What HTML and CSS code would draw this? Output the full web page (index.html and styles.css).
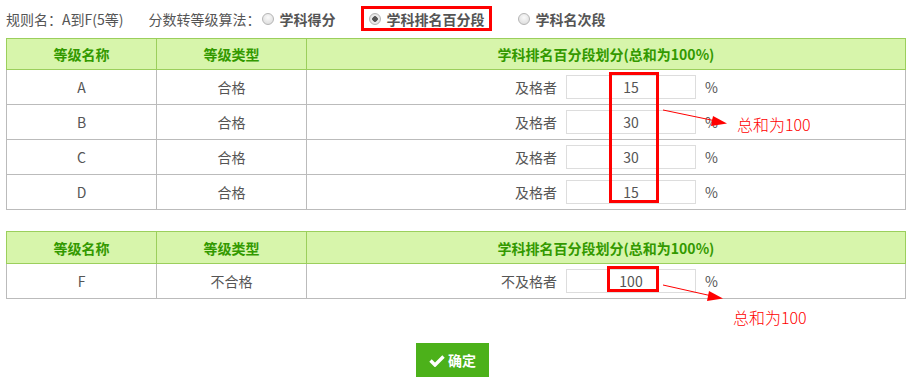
FILE: index.html
```html
<!DOCTYPE html>
<html lang="zh-CN">
<head>
    <meta charset="UTF-8">
    <meta name="viewport" content="width=device-width, initial-scale=1.0">
    <title>等级规则设置</title>

    <!-- CSS Styling -->
    <link rel="stylesheet" href="styles.css">
</head>
<body>

    <div class="page">

        <!-- Rule name and conversion method -->
        <div class="rule-bar">
            <span class="rule-name">规则名：A到F(5等)</span>
            <span class="algo-label">分数转等级算法：</span>
            <label class="opt"><span class="radio"></span>学科得分</label>
            <label class="opt opt-marked"><span class="radio checked"></span>学科排名百分段</label>
            <label class="opt"><span class="radio"></span>学科名次段</label>
        </div>

        <!-- Passing grades -->
        <table class="grade-table">
            <colgroup>
                <col class="col-name">
                <col class="col-type">
                <col>
            </colgroup>
            <thead>
                <tr>
                    <th>等级名称</th>
                    <th>等级类型</th>
                    <th>学科排名百分段划分(总和为100%)</th>
                </tr>
            </thead>
            <tbody>
                <tr>
                    <td>A</td>
                    <td>合格</td>
                    <td><div class="pct-field"><span class="pct-label">及格者</span><input type="text" value="15"><span class="pct-unit">%</span></div></td>
                </tr>
                <tr>
                    <td>B</td>
                    <td>合格</td>
                    <td><div class="pct-field"><span class="pct-label">及格者</span><input type="text" value="30"><span class="pct-unit">%</span></div></td>
                </tr>
                <tr>
                    <td>C</td>
                    <td>合格</td>
                    <td><div class="pct-field"><span class="pct-label">及格者</span><input type="text" value="30"><span class="pct-unit">%</span></div></td>
                </tr>
                <tr>
                    <td>D</td>
                    <td>合格</td>
                    <td><div class="pct-field"><span class="pct-label">及格者</span><input type="text" value="15"><span class="pct-unit">%</span></div></td>
                </tr>
            </tbody>
        </table>

        <!-- Failing grade -->
        <table class="grade-table fail-table">
            <colgroup>
                <col class="col-name">
                <col class="col-type">
                <col>
            </colgroup>
            <thead>
                <tr>
                    <th>等级名称</th>
                    <th>等级类型</th>
                    <th>学科排名百分段划分(总和为100%)</th>
                </tr>
            </thead>
            <tbody>
                <tr>
                    <td>F</td>
                    <td>不合格</td>
                    <td><div class="pct-field"><span class="pct-label">不及格者</span><input type="text" value="100"><span class="pct-unit">%</span></div></td>
                </tr>
            </tbody>
        </table>

        <!-- Submit -->
        <div class="actions">
            <button type="button" class="btn-ok">
                <svg class="icon-check" width="16" height="13" viewBox="0 0 16 13">
                    <polyline points="1.5,6.5 6,11 14.5,2.5" fill="none" stroke="#fff" stroke-width="3.4"/>
                </svg>
                确定
            </button>
        </div>

        <!-- Notes drawn on top -->
        <div class="mark mark-column"></div>
        <div class="mark mark-fail"></div>
        <svg class="arrows" width="914" height="379" viewBox="0 0 914 379">
            <line x1="663" y1="110" x2="716" y2="121" stroke="#f00" stroke-width="1"/>
            <polygon points="727,123.5 713,116 711,126" fill="#f00"/>
            <line x1="663" y1="285" x2="712" y2="296" stroke="#f00" stroke-width="1"/>
            <polygon points="723,298.5 709,291 707,301" fill="#f00"/>
        </svg>
        <span class="note note-pass">总和为100</span>
        <span class="note note-fail">总和为100</span>
    </div>

</body>
</html>
```

FILE: styles.css
```css
* {
    margin: 0;
    padding: 0;
    box-sizing: border-box;
    font-family: 'Noto Sans CJK SC', 'Noto Sans', sans-serif;
}
body {
    background-color: #fff;
    color: #555;
    font-size: 14px;
}
.page {
    position: relative;
    width: 914px;
    height: 379px;
    padding-left: 6px;
}

/* top bar */
.rule-bar {
    display: flex;
    align-items: center;
    height: 38px;
    padding-bottom: 1px;
    white-space: nowrap;
}
.algo-label {
    margin-left: 25px;
}
.opt {
    display: flex;
    align-items: center;
    margin-left: 26px;
    font-weight: bold;
    color: #555;
}
.algo-label + .opt {
    margin-left: 2px;
}
.opt-marked {
    border: 3px solid #f00;
    height: 25px;
    padding: 0 5px;
}
.radio {
    display: inline-block;
    width: 12px;
    height: 12px;
    border: 1px solid #b5b5b5;
    border-radius: 50%;
    background: radial-gradient(circle at 50% 35%, #fafafa, #d8d8d8);
    margin-right: 5px;
}
.radio.checked {
    background: radial-gradient(circle, #555 0, #555 2.5px, #eee 3px, #d8d8d8 100%);
}

/* grade tables */
.grade-table {
    width: 900px;
    border-collapse: collapse;
    table-layout: fixed;
}
.col-name, .col-type {
    width: 150px;
}
.grade-table th {
    height: 31px;
    background-color: #d7f5ab;
    border: 1px solid #9bcf5c;
    color: #339900;
    font-weight: bold;
    font-size: 14px;
}
.grade-table td {
    height: 35px;
    border: 1px solid #bbb;
    text-align: center;
}
.fail-table {
    margin-top: 21px;
}
.fail-table th {
    height: 32px;
}
.pct-field {
    display: flex;
    align-items: center;
    justify-content: center;
}
.pct-label {
    width: 100px;
    text-align: right;
    margin-right: 9px;
}
.pct-field input {
    width: 130px;
    height: 24px;
    border: 1px solid #ddd;
    text-align: center;
    font-size: 14px;
    color: #555;
    font-family: 'Noto Sans CJK SC', 'Noto Sans', sans-serif;
}
.pct-unit {
    width: 50px;
    margin-left: 9px;
    text-align: left;
}

/* submit */
.actions {
    display: flex;
    justify-content: center;
    width: 900px;
    padding-right: 7px;
    margin-top: 44px;
}
.btn-ok {
    display: flex;
    align-items: center;
    justify-content: center;
    width: 73px;
    height: 34px;
    background-color: #4cb11a;
    color: #fff;
    border: none;
    font-weight: bold;
    font-size: 14px;
    cursor: pointer;
}
.icon-check {
    margin-right: 3px;
}

/* annotations */
.mark {
    position: absolute;
    border: 3px solid #f00;
}
.mark-column {
    left: 609px;
    top: 72px;
    width: 50px;
    height: 131px;
}
.mark-fail {
    left: 607px;
    top: 266px;
    width: 52px;
    height: 26px;
}
.arrows {
    position: absolute;
    left: 0;
    top: 0;
    pointer-events: none;
}
.note {
    position: absolute;
    color: #f00;
    font-size: 16px;
    line-height: 18px;
    font-weight: 300;
}
.note-pass {
    left: 737px;
    top: 115px;
}
.note-fail {
    left: 733px;
    top: 308px;
}
```
